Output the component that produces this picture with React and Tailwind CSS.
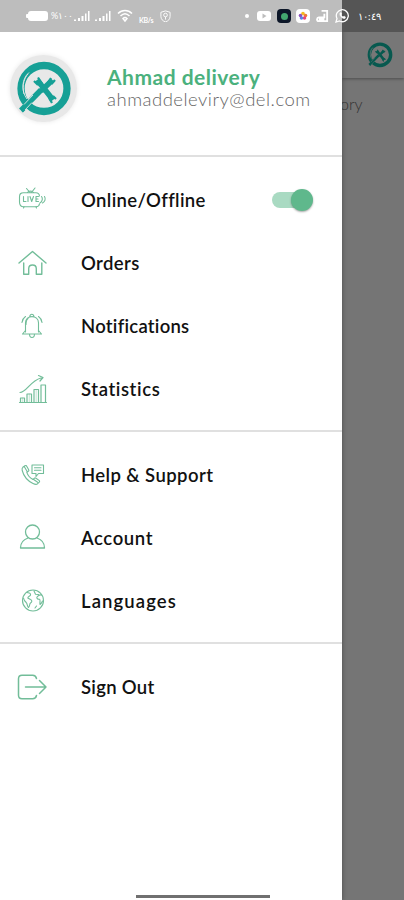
import React from 'react';

const Icon = ({ children, className = 'w-8 h-8', width = 1.2 }) => (
  <svg
    viewBox="0 0 32 32"
    className={`shrink-0 text-[#72bd99] ${className}`}
    fill="none"
    stroke="currentColor"
    strokeWidth={width}
    strokeLinecap="round"
    strokeLinejoin="round"
  >
    {children}
  </svg>
);

const LiveIcon = () => (
  <Icon width={1.1}>
    <path d="M14 8.500 10.500 4.500M15.500 8.500l3.500-4.500M11.500 8.500c1-1.800 5-1.800 6 0" />
    <path d="M23.500 12c-.3-2.200-1.300-3.300-3.500-3.300H7.500C4.500 8.700 3.500 10 3.500 13v5c0 3.300 1.200 4.700 4 4.700H20c2.200 0 3.300-1 3.500-3" />
    <path d="M8 22.700 7.500 24M20 22.700l.5 1.300M25.500 12.500c1.300 1.500 1.300 4.500-1.500 6.500M28.500 12.500c1.500 2.500.5 5-2 6.500" />
    <path d="M7.500 12.500v5H10M12 12.500v5M14 12.500l1.700 5 1.800-5M22.500 12.500H20v5h2.500M20 15h2" />
  </Icon>
);

const HomeIcon = () => (
  <Icon width={1.4}>
    <path d="M3 16 16.500 4.500 30 16" />
    <path d="M7.700 16v11.300h5v-5.500c0-5 7.600-5 7.600 0v5.500h5.500V16" />
  </Icon>
);

const BellIcon = () => (
  <Icon width={1.1}>
    <path d="M13.800 6.500c.3-3 3.800-3 4.100 0M9.500 22v-9.200c0-8.300 13-8.300 13 0V22" />
    <path d="M9.500 20.500 6.500 24h19l-3-3.500M13.500 24c0 4.700 5 4.700 5 0" />
    <path d="M9.500 6.500C7.300 8 6.300 10 6 12.500M22.500 6.500c2.200 1.500 3.200 3.500 3.500 6M12 8.500c-2 1.500-2 3.500-2 6" />
  </Icon>
);

const StatisticsIcon = () => (
  <Icon width={1.2}>
    <path d="M4 19.500c6.500 0 10-11.500 21-14.500M22.500 2.500 27 4.500 24 8" />
    <path d="M3.500 29.500h27M4.500 29v-4h4v4M11 29v-8h4.500v8M18 29V16.500h4.500V29M25 29V12h4.500v17" />
    <path d="M6.500 25v4M13.300 21v8M20.200 16.500V29" opacity=".35" />
  </Icon>
);

const SupportIcon = () => (
  <Icon width={1.1}>
    <path d="M6.800 8.300 9 6.700c.7-.5 1.300-.2 1.700.5l2 3.500c.4.700.2 1.200-.4 1.600l-1.500 1c1 3 3.200 5.500 6.200 7.200l1.300-1.200c.5-.5 1.100-.5 1.700-.1l3 2.200c.7.500.8 1.100.2 1.800l-1.500 1.500c-1 1-2.700.8-4.700-.2C11 21.500 7.500 16.500 6.200 11.500c-.3-1.400-.2-2.500.6-3.200Z" />
    <path d="m8.200 7.400 3.100 5.400M17.300 20.200l4.700 3.300" />
    <path d="M16 6h11.500v8.500h-5l-2.500 3v-3h-4V6ZM18.500 8.800h6.500M18.500 11.300h6.500" />
  </Icon>
);

const AccountIcon = () => (
  <Icon width={1.3}>
    <circle cx="16.500" cy="10" r="7" />
    <path d="M12 16C7.500 17.500 4.500 21 4.500 26h24c0-5-3-8.500-7.500-10" />
  </Icon>
);

const GlobeIcon = () => (
  <Icon width={1.1}>
    <circle cx="17" cy="15.500" r="10.500" />
    <path d="M11 7.500c2 .5 4 .5 3.500 2.500-.4 1.500-2.500 1-2.700 3l2.700 1.500c2 1 1.500 2.500 0 3.500-1.200.8-.5 3.500-2 4.500-1.500-1.500-1-4-2.300-5-1.700-1.500-2.500-3-2.700-4.500M18 6l1.500 3.300 3 .2M25.500 10c-1.500-.5-3.300.5-4.500 2-.8 1.500 1 2.500 2.500 2.200 1.300.5 0 3 .5 5.300.8-.7 2-2 2.500-3.500M20.500 21l-1.500 2" />
  </Icon>
);

const SignOutIcon = () => (
  <Icon width={1.5}>
    <path d="M20.500 7.500C20 5 19 4.300 16.700 4.300H6C3.500 4.300 2.500 5.300 2.500 7.800v16.400c0 2.500 1 3.500 3.500 3.500h10.700c2.300 0 3.300-.7 3.800-3.200" />
    <path d="M9.500 16H30M23.500 9.500 30 16l-6.500 6.500" />
  </Icon>
);

const Logo = ({ className, scratch = '#e8e8e8' }) => (
  <svg viewBox="0 0 56 56" className={className} fill="none" stroke="currentColor">
    <circle cx="28" cy="27.500" r="23" strokeWidth="7.300" />
    <path d="M25 29 5 49.500" strokeWidth="5.500" />
    <path d="m21 19 7.500 9 8.500 11M36.500 19 25 30" strokeWidth="5.500" />
    <path d="m18 20 4 4M22 16.500l4 6M35 17l-3 4.500M39 19l-3.500 4M40 38l-3-3M36 42l-3-5M6 50.500l7-7" strokeWidth="2.200" />
    <path d="M11 38C5 30 5.500 18 13 11.500M8 33C5.500 24 9 16 12 13M8 43.500l9-9.500M9 49l7-7.500" stroke={scratch} strokeWidth="0.9" />
  </svg>
);

const Signal = () => (
  <svg viewBox="0 0 17 12" className="w-[17px] h-3" fill="white">
    <path d="M1 9.500h2V11H1zM5 8h2v3H5zM8.500 6h2v5h-2zM12 3.500h1.500V11H12zM15 1h1.500v10H15z" />
  </svg>
);

const StatusBar = () => (
  <div className="absolute inset-x-0 top-0 z-20 flex h-8 text-white">
    <div className="relative flex w-[342px] shrink-0 items-center bg-[#bdbdbd] pl-[26px]">
      <svg viewBox="0 0 22 12" className="w-[22px] h-3" fill="white">
        <rect x="2" y="1" width="20" height="10" rx="3" />
        <rect y="4" width="3" height="4" rx="1" />
      </svg>
      <span className="ml-[3px] w-[20px] whitespace-nowrap text-[9px] tracking-[-0.5px]">%۱۰۰</span>
      <span className="ml-[2px]"><Signal /></span>
      <span className="ml-1"><Signal /></span>
      <svg viewBox="0 0 16 14" className="ml-[6px] h-3.5 w-4" fill="none" stroke="white" strokeWidth="1.500">
        <path d="M1 4.500c4-4 10-4 14 0M3.500 7c3-3 6-3 9 0M6 9.500c1.300-1.300 2.700-1.300 4 0L8 12Z" />
      </svg>
      <span className="ml-[6px] mt-2 w-4 text-[7px] font-bold leading-none tracking-[-0.3px]">KB/s</span>
      <svg viewBox="0 0 12 14" className="ml-[5px] w-[11px]" fill="none" stroke="white">
        <path d="M6 1 11 2.500V7c0 3-2 5-5 6-3-1-5-3-5-6V2.500Z" />
        <circle cx="6" cy="5.500" r="2" /><path d="M6 7.500v3" />
      </svg>
      <div className="ml-auto flex items-center pr-px">
        <span className="mr-[8px] h-1 w-1 rounded-full bg-white" />
        <svg viewBox="0 0 14 12" className="w-3.5"><rect y="1" width="14" height="10" rx="3" fill="white" /><path d="m5.500 3.500 4 2.500-4 2.500Z" fill="#bdbdbd" /></svg>
        <span className="ml-[6px] flex h-3.5 w-3.5 items-center justify-center rounded bg-[#0c1628]"><span className="h-[7px] w-[7px] rounded-sm bg-[#42a66f]" /></span>
        <svg viewBox="0 0 14 14" className="ml-[5px] w-3.5">
          <rect width="14" height="14" rx="4" fill="white" />
          <circle cx="7" cy="4.500" r="1.800" fill="#f5ba22" /><circle cx="9.500" cy="6.500" r="1.800" fill="#ed7934" />
          <circle cx="8.500" cy="9" r="1.800" fill="#e54880" /><circle cx="5.500" cy="9" r="1.800" fill="#5688e8" /><circle cx="4.500" cy="6.500" r="1.800" fill="#8e52bd" />
        </svg>
        <svg viewBox="0 0 14 14" className="ml-[6px] mr-[12px] w-[13px]" fill="none" stroke="white" strokeWidth="2">
          <path d="M6 1h6v11H3c-3 0-2-4 0-4h6V4M3 10h6" />
        </svg>
      </div>
      <svg viewBox="0 0 14 14" className="absolute left-[335px] top-[9px] w-3.5" fill="none" stroke="white" strokeWidth="1.300">
        <path d="m1 13 1-3.500A6 6 0 1 1 4.500 12Z" />
        <path d="M5 4c-1 2 2 6 5 5.500L10.500 8 9 7l-1 1-2-2 .8-1L6 3.500Z" fill="white" strokeWidth=".5" />
      </svg>
    </div>
    <div className="flex flex-1 items-center bg-[#555] pl-4 text-[10px] font-medium">۱۰:٤٩</div>
  </div>
);

const sections = [
  [
    { label: 'Online/Offline', icon: LiveIcon, toggle: true, text: 'text-[18.5px] tracking-[0.35px]' },
    { label: 'Orders', icon: HomeIcon, text: 'text-[18.5px] tracking-[0.4px]' },
    { label: 'Notifications', icon: BellIcon, text: 'text-[18.5px] tracking-[0.25px]' },
    { label: 'Statistics', icon: StatisticsIcon, text: 'text-[18.5px] tracking-[0.6px]' },
  ],
  [
    { label: 'Help & Support', icon: SupportIcon, text: 'text-[18.5px] tracking-[0.42px]' },
    { label: 'Account', icon: AccountIcon, text: 'text-[18.5px] tracking-[0.6px]' },
    { label: 'Languages', icon: GlobeIcon, text: 'text-[18.5px] tracking-[1.1px]' },
  ],
  [{ label: 'Sign Out', icon: SignOutIcon, text: 'text-[18.5px] tracking-[0.3px]' }],
];

const Toggle = () => (
  <button aria-label="Online" className="relative ml-auto mr-[29px] h-6 w-[41px]">
    <span className="absolute left-0 top-1 h-4 w-[37px] rounded-full bg-[#a9dac2]" />
    <span className="absolute right-0 top-px h-[22px] w-[22px] rounded-full bg-[#5fb88c] shadow-[0_1px_2px_rgba(0,0,0,0.35)]" />
  </button>
);

const MenuRow = ({ item }) => {
  const ItemIcon = item.icon;
  return (
    <div className="flex h-[63px] items-center pl-4">
      <ItemIcon />
      <span className={`ml-[33px] whitespace-nowrap font-semibold leading-7 text-[#111] ${item.text}`}>{item.label}</span>
      {item.toggle && <Toggle />}
    </div>
  );
};

const Drawer = () => (
  <aside className="relative z-10 flex h-full w-[342px] shrink-0 flex-col bg-white shadow-[1px_0_4px_rgba(0,0,0,0.25)]">
    <header className="flex h-[155px] shrink-0 pl-[10px] pt-[55px]">
      <div className="flex h-[67px] w-[67px] shrink-0 items-center justify-center rounded-full bg-[#e8e8e8] shadow-[0_0_5px_#e8e8e8]">
        <Logo className="h-14 w-14 text-[#16a096]" />
      </div>
      <div className="ml-[30px] pt-[10px]">
        <h1 className="whitespace-nowrap text-[21px] font-bold leading-6 tracking-[0.5px] text-[#4bb17d]">Ahmad delivery</h1>
        <p className="whitespace-nowrap text-[18.5px] font-light leading-5 tracking-[0.5px] text-[#666]">ahmaddeleviry@del.com</p>
      </div>
    </header>
    {sections.map((items, index) => (
      <section key={index} className="border-t-2 border-[#e0e0e0] pb-[10px] pt-[11px]">
        {items.map((item) => <MenuRow key={item.label} item={item} />)}
      </section>
    ))}
    <div className="mb-[2px] ml-[136px] mt-auto h-[3px] w-[134px] bg-[#707070]" />
  </aside>
);

export default function App() {
  return (
    <main className="relative flex h-[900px] w-[404px] overflow-hidden bg-[#757575] font-['Lato','Noto_Sans',sans-serif]">
      <StatusBar />
      <Drawer />
      <div className="min-w-0 flex-1 pt-8">
        <div className="flex h-[46px] items-center justify-end bg-[#777] pr-[11px] shadow-[0_1px_3px_rgba(0,0,0,0.35)]">
          <Logo className="h-[26px] w-[26px] text-[#07594f]" scratch="#777" />
        </div>
        <p className="-ml-[2px] mt-[14px] text-[16px] font-light leading-6 text-[#333]">ory</p>
      </div>
    </main>
  );
}
